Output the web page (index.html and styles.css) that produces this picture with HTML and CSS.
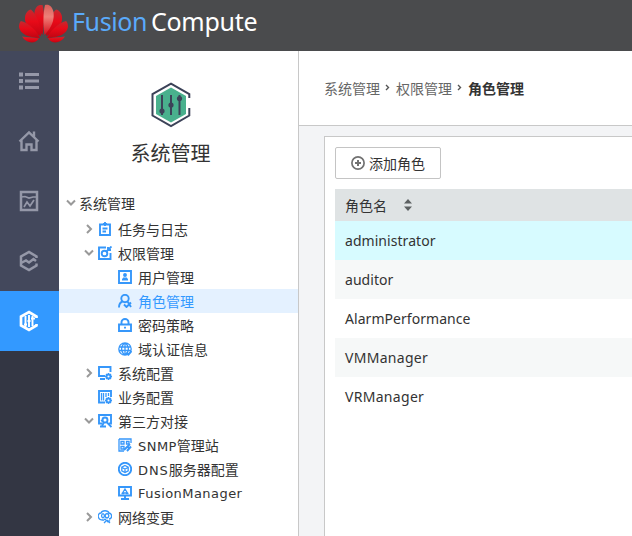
FILE: index.html
```html
<!DOCTYPE html>
<html lang="zh-CN">
<head>
<meta charset="utf-8">
<title>FusionCompute</title>
<link rel="stylesheet" href="styles.css">
</head>
<body>
<header class="topbar">
  <svg class="logo" width="50" height="40" viewBox="0 0 50 40">
    <defs>
      <linearGradient id="petal" x1="0" y1="0" x2="0" y2="1"><stop offset="0" stop-color="#c42a30"/><stop offset=".45" stop-color="#e80a18"/><stop offset="1" stop-color="#c00412"/></linearGradient>
      <linearGradient id="shine" x1="0" y1="0" x2="0" y2="1"><stop offset="0" stop-color="#d8605a"/><stop offset=".4" stop-color="#ee8078"/><stop offset="1" stop-color="#d80c1a"/></linearGradient>
    </defs>
    <g fill="url(#petal)">
      <path d="M23.500 32C16 24 14.500 18 15.500 9C16.500 3 20 1.500 23.500 2C26 10 25 22 23.500 32Z"/>
      <path d="M22 33C12 29 5 22 6 14C6.500 10 9 7 12 6.500C18 12 22 23 22 33Z"/>
      <path d="M21 35C10 35 1 31 0 24C0 21 1 18.500 2 18C10 20 18 28 21 35Z"/>
      <path d="M20 35.500C16 41 8 41 3 33.500C9 34 14 34.500 20 35.500Z"/>
      <path d="M27 33C37 29 44 22 43 14C42.500 10 40 7 37 6.500C31 12 27 23 27 33Z"/>
      <path d="M28 35C39 35 48 31 49 24C49 21 48 18.500 47 18C39 20 31 28 28 35Z"/>
      <path d="M29 35.500C33 41 41 41 46 33.500C40 34 35 34.500 29 35.500Z"/>
    </g>
    <path fill="url(#shine)" d="M25.500 32C33 24 35.500 17 34.500 9C33 3 30 1 26 2C24 10 24 22 25.500 32Z"/>
  </svg>
  <span class="brand"><span class="brand-a">Fusion</span><span class="brand-b">Compute</span></span>
</header>
<div class="shell">
  <nav class="rail">
    <a class="rail-item"><svg width="22" height="20" viewBox="0 0 22 20" fill="currentColor"><path d="M1 1.500h4v4H1zM1 8h4v4H1zM1 14.500h4v4H1zM7 2h14v3H7zM7 8.500h14v3H7zM7 15h14v3H7z"/></svg></a>
    <a class="rail-item"><svg width="22" height="22" viewBox="0 0 22 22" fill="none" stroke="currentColor" stroke-width="2.400"><path d="M1.500 11.500L11 2.500L20.500 11.500M16 7V1.500M3.500 10V20H8.500V14.500H13.500V20H18.500V10"/></svg></a>
    <a class="rail-item"><svg width="20" height="22" viewBox="0 0 20 22" fill="none" stroke="currentColor" stroke-width="2.500"><path d="M2 2H18V20H2Z"/><path stroke-width="1.700" d="M2 7L6 6.500L10 8L14 7H18M5 17L8 12L11 16L15 10"/></svg></a>
    <a class="rail-item"><svg width="20" height="22" viewBox="0 0 20 22" fill="none" stroke="currentColor" stroke-width="2.500"><path d="M17.500 8V6.500L10 2L2 6.500V15.500L10 20L17.500 15.500V13.500"/><path d="M2 13L7 10.500L10 12.500L14.500 9L17 11"/></svg></a>
    <a class="rail-item rail-on"><svg width="20" height="22" viewBox="0 0 20 22" fill="none" stroke="currentColor" stroke-width="2"><path stroke-width="2.700" d="M17.500 8V6.500L10 2L2 6.500V15.500L10 20L17.500 15.500V14"/><path stroke-width="1.900" d="M6.500 6V17M10 5V17M13.500 6V16M5 14.500H8M8.500 11H11.500M12 8.500H16"/></svg></a>
  </nav>
  <aside class="side">
    <div class="hero">
      <svg width="42" height="46" viewBox="0 0 42 46">
        <path d="M21 5.500L36 14V32L21 40.500L6 32V14Z" fill="#49b08d"/>
        <path d="M39.300 16V12.200L21 1.700L2.500 12.200V33.500L21 44L39.300 33.500V26" fill="none" stroke="#3c4258" stroke-width="2"/>
        <path d="M12 13V33M21 13V33M29.500 13V33" stroke="#3c4258" stroke-width="2" fill="none"/>
        <g fill="#3c4258"><circle cx="12" cy="29" r="2.600"/><circle cx="21" cy="23" r="2.600"/><circle cx="29.500" cy="16.500" r="2.600"/></g>
      </svg>
      <h1>系统管理</h1>
    </div>
    <ul class="tree">
      <li class="root"><svg class="arr" viewBox="0 0 10 10"><path d="M1 2.500L5 6.500L9 2.500"/></svg><span>系统管理</span></li>
      <li class="l1"><svg class="arr" viewBox="0 0 10 10"><path d="M3 1L7 5L3 9"/></svg><svg class="ic" viewBox="0 0 14 14"><path d="M2 2.500H12V13H2Z"/><path d="M4.500 6.500H9.500M4.500 9.500H8M5 2H9" /><path d="M7 0V4"/></svg><span>任务与日志</span></li>
      <li class="l1"><svg class="arr" viewBox="0 0 10 10"><path d="M1 2.500L5 6.500L9 2.500"/></svg><svg class="ic" viewBox="0 0 14 14"><path d="M8 1.500H1V13H12.500V7"/><circle cx="6.500" cy="7.500" r="2.800"/><path d="M8.500 5.500L13.500 .5M10 1V4H13"/></svg><span>权限管理</span></li>
      <li class="l2"><svg class="ic" viewBox="0 0 14 14"><path d="M1 1H13V13H1Z"/><path d="M4 9.500H10M5 8.500H9"/><circle cx="7" cy="5" r="1"/></svg><span>用户管理</span></li>
      <li class="l2 on"><svg class="ic" viewBox="0 0 14 14"><circle cx="7" cy="4.500" r="3.700"/><path d="M4.500 7.500C2 8.500 1 10.500 1 13.500M9.500 7.500L13 13M6 10.500L8.500 13L13 8.500"/></svg><span>角色管理</span></li>
      <li class="l2"><svg class="ic" viewBox="0 0 14 14"><path d="M1 6.500H13V13H1Z"/><path d="M3.500 6.500V4A3.500 3 0 0 1 10.500 4V6.500M7 8.800V10.500"/></svg><span>密码策略</span></li>
      <li class="l2"><svg class="ic" viewBox="0 0 14 14"><path class="thin" d="M7 .8A6.200 6.200 0 1 0 7 13.200A6.200 6.200 0 0 0 7 .8ZM1 5H13M1 8.500H13M7 1V13M7 1C2.500 4 2.500 10 7 13C11.500 10 11.500 4 7 1"/><path d="M8.500 10.500L10.500 12.500L13.500 9"/></svg><span>域认证信息</span></li>
      <li class="l1"><svg class="arr" viewBox="0 0 10 10"><path d="M3 1L7 5L3 9"/></svg><svg class="ic" viewBox="0 0 14 14"><path d="M7 10H1V1H12.500V6M2 13H7"/><circle cx="10.500" cy="10.500" r="2"/><path class="thin" d="M10.500 7V8.500M10.500 12.500V14M7 10.500H8.500M12.500 10.500H14M8 8L9 9M12 12L13 13M13 8L12 9M9 12L8 13"/></svg><span>系统配置</span></li>
      <li class="l1"><i class="arr"></i><svg class="ic" viewBox="0 0 14 14"><path d="M7 12.500H1V1H13V7"/><path class="thin" d="M3.500 3V10.500M5.500 3V10.500M8 3V7M10.500 3V6"/><circle cx="10.500" cy="10.500" r="2"/><path class="thin" d="M10.500 7V8.500M10.500 12.500V14M7 10.500H8.500M12.500 10.500H14M8 8L9 9M12 12L13 13M13 8L12 9M9 12L8 13"/></svg><span>业务配置</span></li>
      <li class="l1"><svg class="arr" viewBox="0 0 10 10"><path d="M1 2.500L5 6.500L9 2.500"/></svg><svg class="ic" viewBox="0 0 14 14"><path d="M4 9.500H1V1H13V9.500H11M2 12.500H8"/><circle cx="7" cy="6" r="2.500"/><path d="M3 7L5 6M8.500 8L13.500 13M6 8L4 12"/></svg><span>第三方对接</span></li>
      <li class="l2"><svg class="ic" viewBox="0 0 14 14"><path class="thin" d="M1 1H13V5M1 1V13H6M3 3.500H6V6H3ZM8.500 3.500H11V6H8.500ZM3 8.500H6V11H3Z"/><path d="M6 12L8.500 9.500L12 6M9 13L13 8.500M9 8L12 11"/></svg><span class="latin">SNMP<b>管理站</b></span></li>
      <li class="l2"><svg class="ic" viewBox="0 0 14 14"><circle cx="7" cy="7" r="6.200"/><path class="thin" d="M7 3.500L10.200 5.200V8.800L7 10.500L3.800 8.800V5.200ZM4 5.500L7 7L10 5.500M7 7V10.500"/></svg><span class="latin dns">DNS<b>服务器配置</b></span></li>
      <li class="l2"><svg class="ic" viewBox="0 0 14 14"><path d="M1 1H13V9.500H1ZM7 9.500V13M3 13H11"/><path class="thin" d="M7 3L9.500 7H4.500ZM3.500 7.500H6M8 7.500H10.500"/></svg><span class="latin">FusionManager</span></li>
      <li class="l1"><svg class="arr" viewBox="0 0 10 10"><path d="M3 1L7 5L3 9"/></svg><svg class="ic" viewBox="0 0 14 14"><path class="thin" d="M5 10C-1 10 -1 3 3 3C4 0 10 0 11 3C15 4 14 9 11 9M5 3.500A2.500 2.500 0 0 0 5 8A2.500 2.500 0 0 0 5 3.500M9 3.500A2.300 2.300 0 0 0 9 8A2.300 2.300 0 0 0 9 3.500"/><path class="thin" d="M5 10.500L7 9L10 12L12 10.500M6 13L8 11M9 10L12 13"/></svg><span>网络变更</span></li>
    </ul>
  </aside>
  <main class="main">
    <div class="crumbs"><span>系统管理</span><svg width="5" height="8" viewBox="0 0 5 8"><path d="M1 1L3.500 3.500L1 6"/></svg><span>权限管理</span><svg width="5" height="8" viewBox="0 0 5 8"><path d="M1 1L3.500 3.500L1 6"/></svg><strong>角色管理</strong></div>
    <section class="panel">
      <button class="add"><svg width="14" height="14" viewBox="0 0 14 14" fill="none" stroke="#717171" stroke-width="1.700"><circle cx="7" cy="7" r="6.100"/><path stroke-width="2" d="M4 7H10M7 4V10"/></svg><span>添加角色</span></button>
      <div class="table">
        <div class="th"><span>角色名</span><svg width="8" height="12" viewBox="0 0 8 12" fill="#5c6061"><path d="M4 0L8 4.500H0ZM4 12L8 7.500H0Z"/></svg></div>
        <div class="td hit"><span>administrator</span></div>
        <div class="td alt"><span>auditor</span></div>
        <div class="td"><span>AlarmPerformance</span></div>
        <div class="td alt"><span class="wide">VMManager</span></div>
        <div class="td"><span class="wide">VRManager</span></div>
      </div>
    </section>
  </main>
</div>
</body>
</html>
```
FILE: styles.css
```css
* { box-sizing: border-box; }
body { margin: 0; height: 536px; overflow: hidden; background: #fff; color: #333; font: 14px/24px "Noto Sans", "Noto Sans CJK SC", sans-serif; }
svg { display: block; flex: none; }
.topbar { height: 51px; background: #4a4b4d; display: flex; align-items: flex-start; padding: 3px 0 0 19px; }
.brand { display: flex; gap: 4px; margin-left: 3px; font: 25px/36px "Noto Sans", sans-serif; }
.brand-a { color: #5aaafa; letter-spacing: -.4px; }
.brand-b { color: #fff; letter-spacing: -.3px; }
.shell { display: flex; height: 485px; }
.rail { width: 59px; background: #333643; color: #9598a8; flex: none; }
.rail-item { height: 60px; padding-right: 1px; display: flex; align-items: center; justify-content: center; background: #43485c; }
.rail-on { background: #3399ff; color: #fff; }
.side { width: 240px; border-right: 1px solid #c8c8c8; flex: none; background: #fff; }
.hero { height: 140px; padding: 31px 16px 0 0; display: flex; flex-direction: column; align-items: center; }
.hero h1 { margin: 11px 0 0; font-size: 20px; line-height: 30px; font-weight: 400; }
.tree { list-style: none; margin: 0; padding: 0; }
.tree li { display: flex; align-items: center; height: 24px; white-space: nowrap; }
.tree li > span { padding-top: 1px; }
.tree .root { height: 26px; padding: 0 0 2px 7px; }
.root span { margin-left: 3px; }
.l1 { padding-left: 25px; }
.tree .l2 { padding-left: 59px; }
.arr { width: 10px; height: 10px; fill: none; stroke: #999; stroke-width: 2; flex: none; }
.ic { width: 14px; height: 14px; fill: none; stroke: #3697fa; stroke-width: 1.900; margin-right: 6px; }
.l1 .ic { margin-left: 4px; }
.thin { stroke-width: 1.300; }
.on { background: #e4f1ff; color: #3399ff; }
.tree .latin { font-family: "DejaVu Sans", "Noto Sans CJK SC", sans-serif; font-size: 13px; letter-spacing: .45px; padding-top: 2px; }
.tree .dns { letter-spacing: .9px; }
.latin b { font-weight: 400; font-size: 14px; letter-spacing: 0; }
.main { flex: 1; min-width: 0; background: #f3f4f6; display: flex; flex-direction: column; }
.crumbs { height: 75px; background: #fff; border-bottom: 1px solid #c8c8c8; padding: 2px 0 0 25px; display: flex; align-items: center; color: #666; gap: 5px; flex: none; }
.crumbs svg { fill: none; stroke: #555; stroke-width: 1.400; margin: -2px 1px 0 0; }
.crumbs strong { color: #333; }
.panel { margin: 10px 0 0 25px; flex: 1; background: #fff; border: solid #c8c8c8; border-width: 1px 0 0 1px; padding: 10px 0 0 10px; }
.add { width: 106px; height: 32px; border: 1px solid #c4c4c4; border-radius: 2px; background: #fff; display: flex; align-items: center; gap: 4px; padding: 0 0 0 15px; font: inherit; color: #333; }
.add span { padding-top: 2px; }
.table { margin-top: 10px; }
.th { height: 32px; background: #dfe3e4; display: flex; align-items: center; padding-left: 10px; gap: 17px; }
.th span { padding-top: 2px; }
.td { height: 39px; padding-left: 10px; display: flex; align-items: center; letter-spacing: .05px; }
.wide { letter-spacing: .3px; }
.hit { background: #d7fbff; }
.alt { background: #f6f8f8; }
```
